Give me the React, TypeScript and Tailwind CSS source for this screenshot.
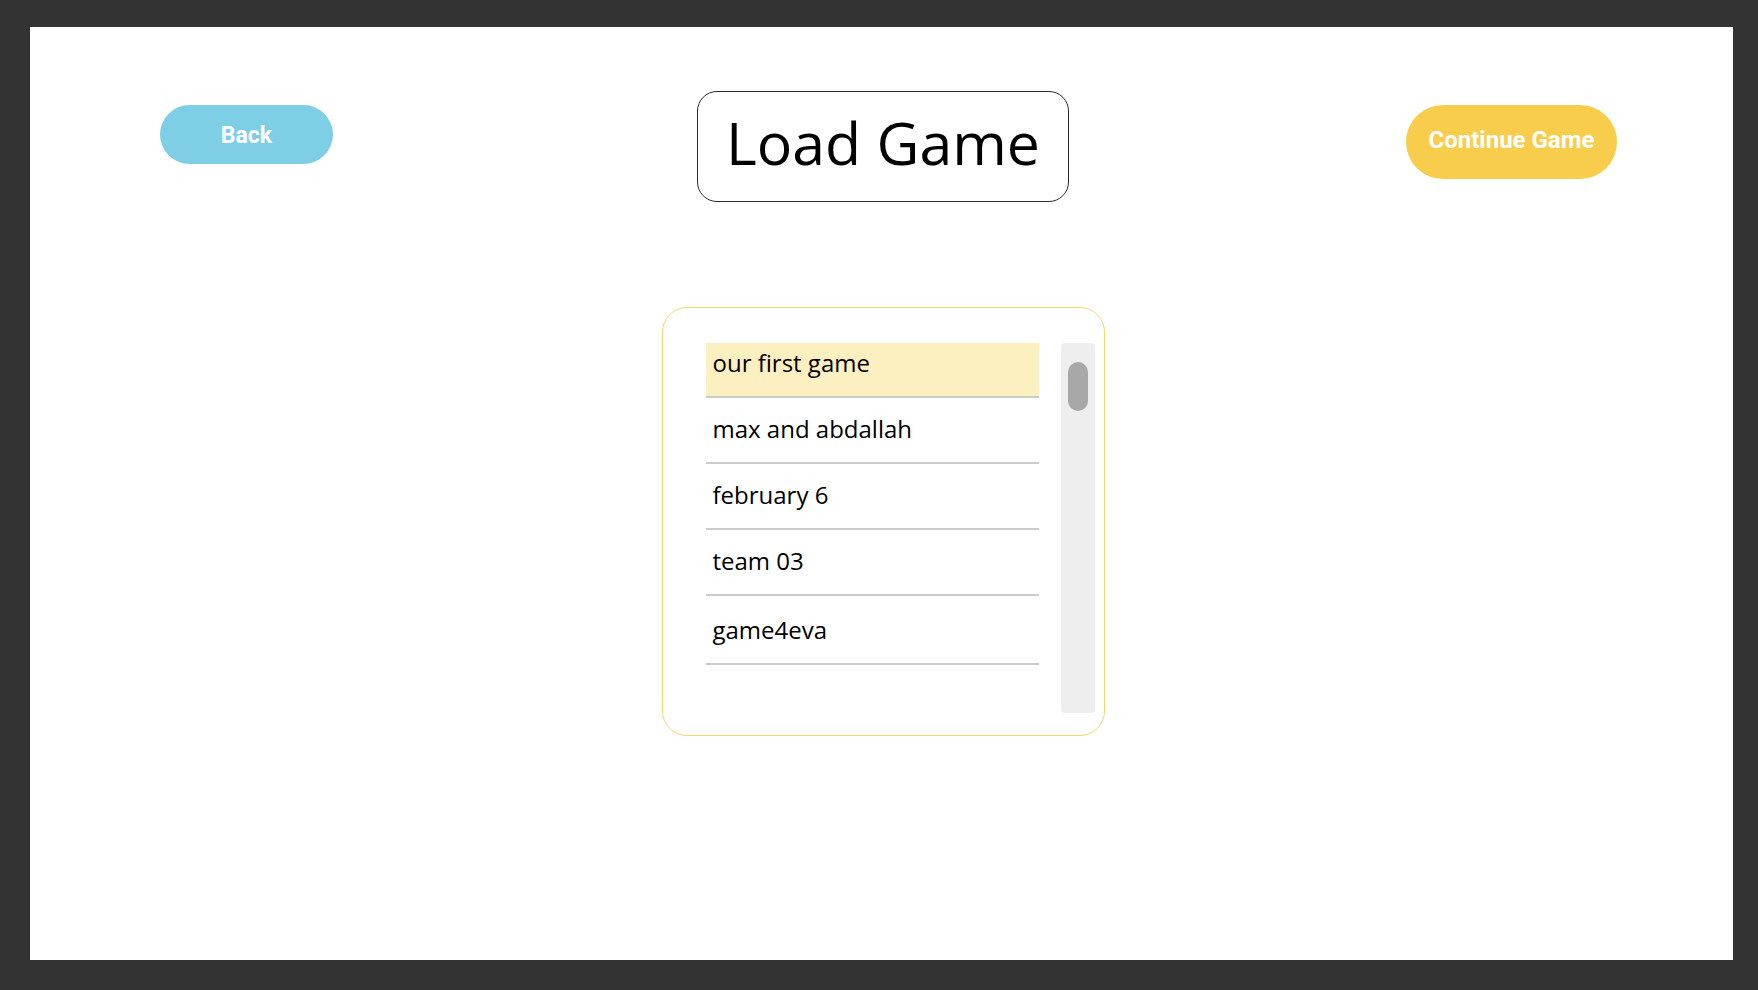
import React, { useState } from 'react'

const saves = ['our first game', 'max and abdallah', 'february 6', 'team 03', 'game4eva']

const SaveRow = ({
  name,
  i,
  selected,
  onSelect,
}: {
  name: string
  i: number
  selected: boolean
  onSelect: (i: number) => void
}) => (
  <li
    onClick={() => onSelect(i)}
    className={`cursor-pointer border-b-2 border-[#cccccc] px-[7px] text-[24px] leading-[32px] text-black ${
      i === 0 ? 'pt-[4px] pb-[17px]' : i === saves.length - 1 ? 'pt-[18px] pb-[17px]' : 'pt-[15px] pb-[17px]'
    } ${selected ? 'bg-[#fdf0c0]' : 'bg-white'}`}
  >
    {name}
  </li>
)

export default function App() {
  const [selected, setSelected] = useState(0)

  return (
    <div className="h-[990px] w-[1758px] bg-[#333333] pt-[27px] pl-[30px] pr-[25px] pb-[30px]">
      <div className="flex h-[933px] flex-col bg-white">
        {/* header */}
        <div className="grid grid-cols-3 items-start pt-[64px] font-['Roboto',sans-serif]">
          <button className="ml-[130px] mt-[14px] h-[59px] w-[173px] justify-self-start rounded-full bg-[#7ecee6] pt-[3px] text-[23px] font-bold text-white">
            Back
          </button>
          <div className="ml-[3px] flex h-[111px] w-[372px] items-center justify-center justify-self-center rounded-[20px] border border-[#2a2a2a] pb-[9px] font-['Open_Sans',sans-serif] text-[59px] text-black">
            Load Game
          </div>
          <button className="mr-[116px] mt-[14px] h-[74px] w-[211px] justify-self-end rounded-full bg-[#f8cd4b] pb-[5px] text-[24px] font-bold text-white">
            Continue Game
          </button>
        </div>

        {/* save list */}
        <div className="mt-[105px] flex justify-center pl-[3px]">
          <div className="flex h-[429px] w-[443px] rounded-[25px] border border-[#f8d46c] pt-[35px] pl-[43px] pr-[9px] pb-[22px] font-['Open_Sans',sans-serif]">
            <ul className="w-[333px]">
              {saves.map((s, i) => (
                <SaveRow key={s} name={s} i={i} selected={selected === i} onSelect={setSelected} />
              ))}
            </ul>
            <div className="ml-[22px] flex h-[370px] w-[34px] justify-center rounded-[4px] bg-[#eeeeee] pt-[19px]">
              <div className="h-[49px] w-[20px] rounded-full bg-[#a8a8a8]" />
            </div>
          </div>
        </div>
      </div>
    </div>
  )
}
